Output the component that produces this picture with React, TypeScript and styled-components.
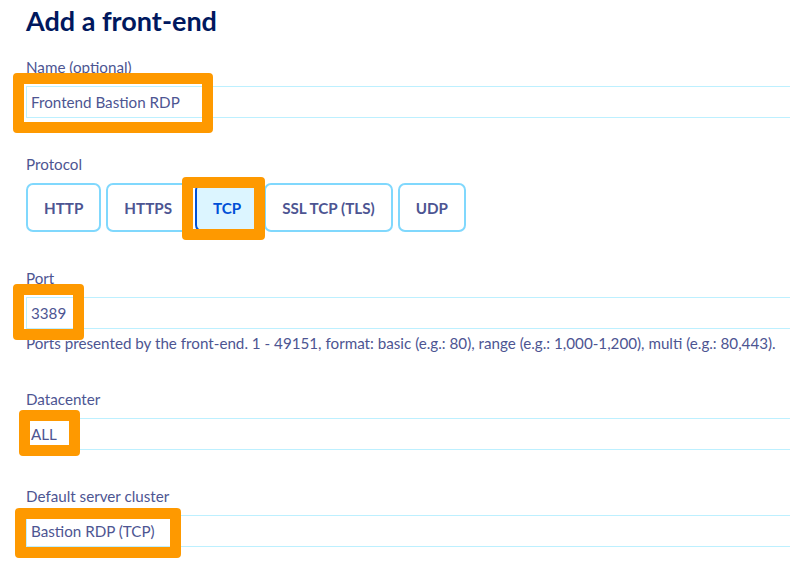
import React from "react";
import styled, { createGlobalStyle } from "styled-components";

const Global = createGlobalStyle`
  html, body {
    margin: 0;
    padding: 0;
    background: #ffffff;
  }
  * { box-sizing: border-box; }
`;

const Page = styled.div`
  padding: 3px 0 24px 26px;
  min-height: 567px;
  font-family: "Lato", "Noto Sans", sans-serif;
  color: #4d5592;
  width: 100%;
  overflow: hidden;
`;

const Title = styled.h1`
  margin: 0 0 18px 0;
  font-size: 27px;
  line-height: 36px;
  font-weight: 700;
  color: #00185e;
`;

const Form = styled.div`
  display: flex;
  flex-direction: column;
  gap: 36px;
`;

const Field = styled.div`
  display: flex;
  flex-direction: column;
`;

const Label = styled.label`
  font-size: 15.2px;
  line-height: 20px;
  margin-bottom: 9px;
`;

const Control = styled.div`
  position: relative;
`;

const TextInput = styled.input`
  display: block;
  width: calc(100% + 12px);
  height: 32px;
  border: 1px solid #bdf0ff;
  border-radius: 0;
  padding: 0 4px;
  font-family: inherit;
  font-size: 15.2px;
  color: #4d5592;
  background: #ffffff;
  outline: none;
`;

const Hint = styled.p`
  margin: 4px 0 0 0;
  font-size: 15.2px;
  line-height: 20px;
  white-space: nowrap;
`;

const ButtonRow = styled.div`
  display: flex;
  gap: 5px;
`;

const ProtoButton = styled.button<{ $active?: boolean }>`
  position: relative;
  height: 49px;
  padding: 0 16px;
  border: 2px solid ${(p) => (p.$active ? "#0050d7" : "#80d8fd")};
  border-radius: 7px;
  background: ${(p) => (p.$active ? "#dcf5ff" : "#ffffff")};
  color: ${(p) => (p.$active ? "#0050d7" : "#4d5592")};
  font-family: inherit;
  font-size: 15.2px;
  font-weight: 700;
  cursor: pointer;
`;

const Highlight = styled.span<{ $l: number; $t: number; $w: number; $h: number }>`
  position: absolute;
  left: ${(p) => p.$l}px;
  top: ${(p) => p.$t}px;
  width: ${(p) => p.$w}px;
  height: ${(p) => p.$h}px;
  border: 11px solid #fe9900;
  border-radius: 4px;
  pointer-events: none;
  z-index: 2;
`;

const protocols = ["HTTP", "HTTPS", "TCP", "SSL TCP (TLS)", "UDP"];

export default function App() {
  return (
    <Page>
      <Global />
      <Title>Add a front-end</Title>
      <Form>
        <Field>
          <Label>Name (optional)</Label>
          <Control>
            <TextInput readOnly value="Frontend Bastion RDP" />
            <Highlight $l={-13} $t={-13} $w={200} $h={60} />
          </Control>
        </Field>
        <Field>
          <Label>Protocol</Label>
          <ButtonRow>
            {protocols.map((p) => (
              <ProtoButton key={p} $active={p === "TCP"}>
                {p}
                {p === "TCP" && <Highlight $l={-15} $t={-8} $w={83} $h={63} />}
              </ProtoButton>
            ))}
          </ButtonRow>
        </Field>
        <Field>
          <Label>Port</Label>
          <Control>
            <TextInput readOnly value="3389" />
            <Highlight $l={-13} $t={-13} $w={71} $h={56} />
          </Control>
          <Hint>
            Ports presented by the front-end. 1 - 49151, format: basic (e.g.: 80), range (e.g.: 1,000-1,200), multi (e.g.: 80,443).
          </Hint>
        </Field>
        <Field>
          <Label>Datacenter</Label>
          <Control>
            <TextInput readOnly value="ALL" />
            <Highlight $l={-7} $t={-8} $w={61} $h={46} />
          </Control>
        </Field>
        <Field>
          <Label>Default server cluster</Label>
          <Control>
            <TextInput readOnly value="Bastion RDP (TCP)" />
            <Highlight $l={-11} $t={-7} $w={166} $h={50} />
          </Control>
        </Field>
      </Form>
    </Page>
  );
}
